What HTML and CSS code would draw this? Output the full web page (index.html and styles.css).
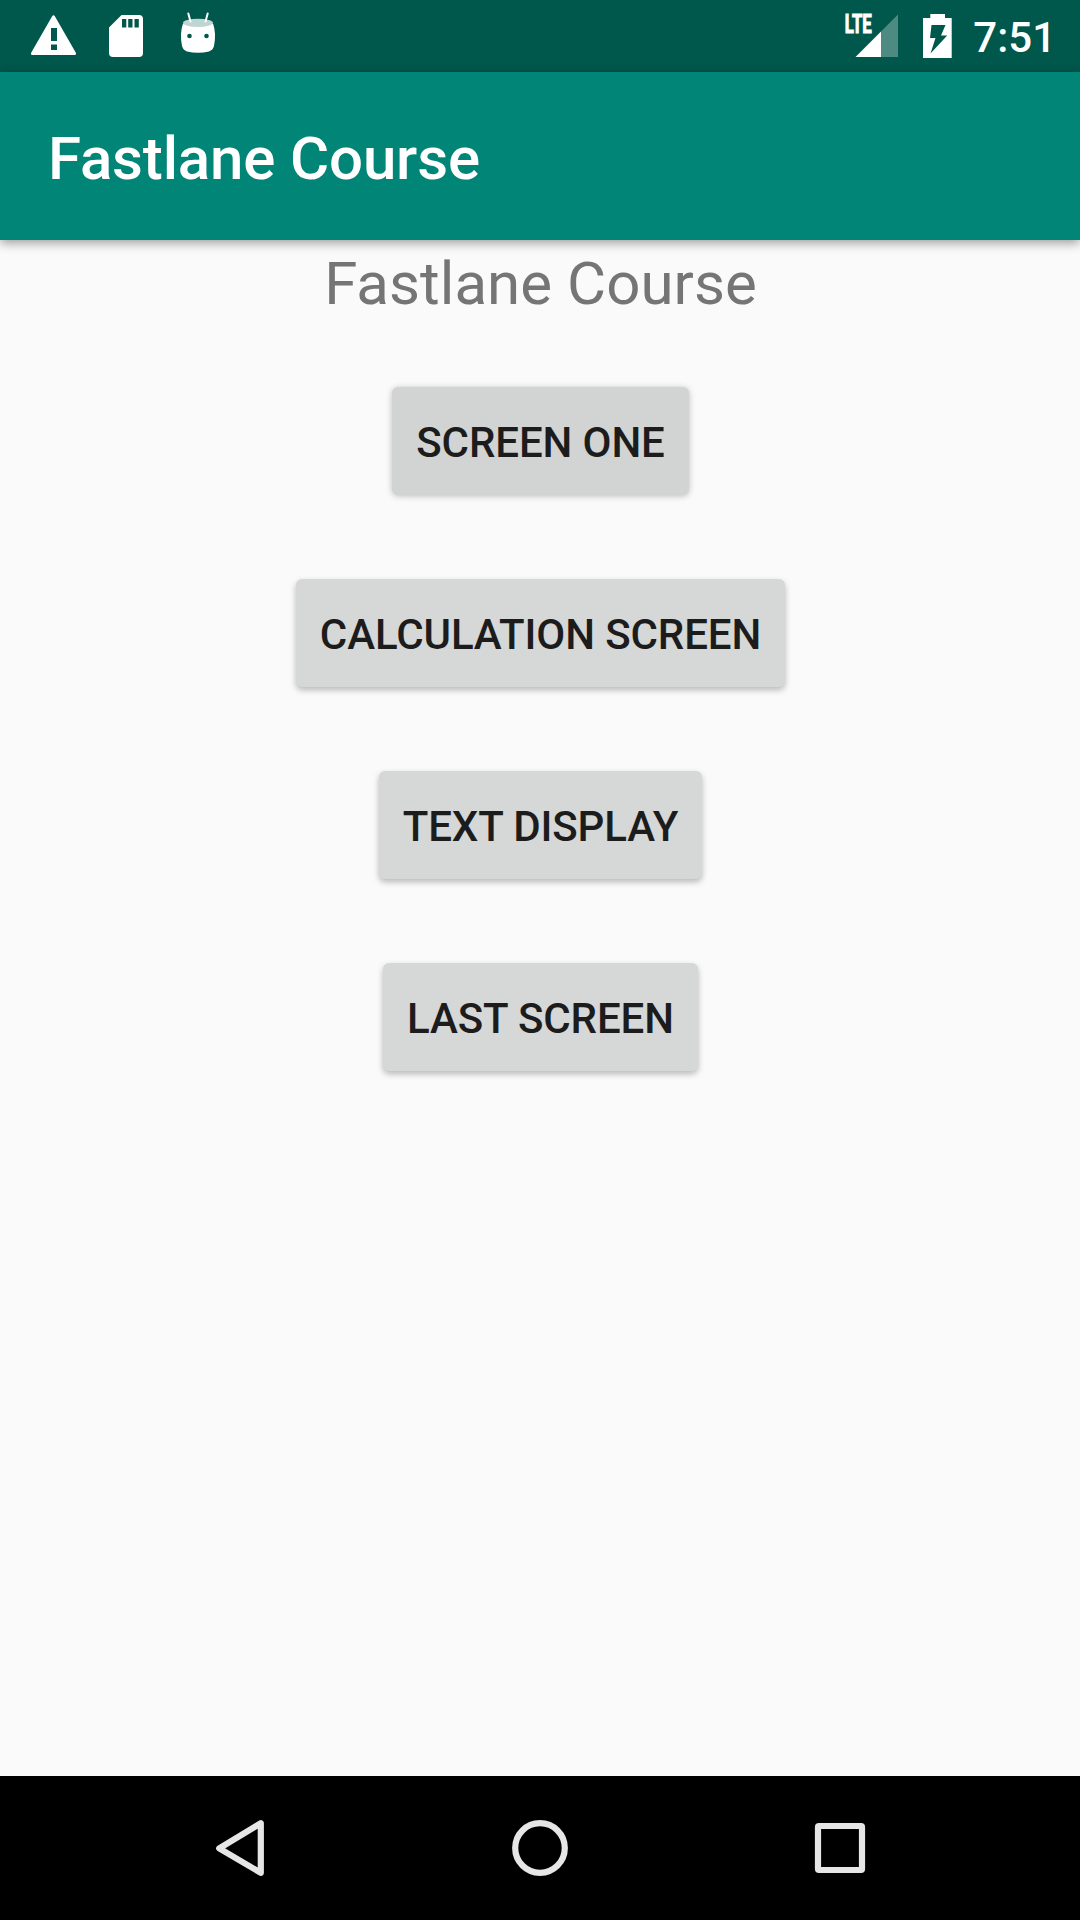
FILE: index.html
```
<!DOCTYPE html>
<html lang="en">
<head>
<meta charset="utf-8">
<title>Fastlane Course</title>
<link rel="stylesheet" href="styles.css">
</head>
<body>
<div class="status">
  <div class="notifications">
    <svg width="72" height="72" viewBox="18 0 72 72"><path fill="#fff" fill-rule="evenodd" d="M52 16.500Q53.500 13.800 55 16.500L75.700 52.500Q76.800 55 74.500 55H32.500Q30.200 55 31.300 52.500ZM51 28v13h6V28zM51 44.500v5.500h6v-5.500z"/></svg>
    <svg width="72" height="72" viewBox="90 0 72 72"><path fill="#fff" fill-rule="evenodd" d="M121.500 15H139a4 4 0 0 1 4 4V53a4 4 0 0 1-4 4H113a4 4 0 0 1-4-4V27.500ZM122 19v8.500h4.300V19zM128.200 19v8.500h4.300V19zM134.500 19v8.500h4.300V19z"/></svg>
    <svg width="72" height="72" viewBox="162 0 72 72">
      <path fill="#fff" d="M183 23.500Q198 29 213 23.500Q216.500 33 214 46Q213 50 209 51.500Q198 54 187 51.500Q183 50 182 46Q179.500 33 183 23.500Z"/>
      <ellipse cx="198" cy="22.800" rx="15" ry="4" fill="#bfd5d1"/>
      <path d="M188.300 13.500L190.500 21.500M207.700 13.500L205.500 21.500" stroke="#fff" stroke-width="2" stroke-linecap="round"/>
      <circle cx="189.500" cy="36" r="2.300" fill="#00574b"/><circle cx="206.500" cy="36" r="2.300" fill="#00574b"/>
    </svg>
  </div>
  <div class="system">
    <svg width="120" height="72" viewBox="840 0 120 72">
      <text class="network" x="844.800" y="33.200" textLength="27" lengthAdjust="spacingAndGlyphs">LTE</text>
      <path fill="#fff" d="M881 31.500V57H855.500Z"/>
      <path fill="#4d8a81" d="M881 31.500L898 14.500V57H881Z"/>
      <path fill="#fff" fill-rule="evenodd" d="M930.300 14H945V18H951.700V58H923V18H930.300ZM931.500 25L930 38H935.500L930.500 53.500L947.200 35.500H941L945.500 25Z"/>
    </svg>
    <span class="clock">7:51</span>
  </div>
</div>
<header class="appbar">Fastlane Course</header>
<main class="content">
  <h1 class="title">Fastlane Course</h1>
  <button class="button pressed">SCREEN ONE</button>
  <button class="button">CALCULATION SCREEN</button>
  <button class="button">TEXT DISPLAY</button>
  <button class="button">LAST SCREEN</button>
</main>
<nav class="navbar">
  <svg width="60" height="60" viewBox="210 1818 60 60"><path d="M219.200 1848.300L260.800 1823.200V1872.800Z"/></svg>
  <svg width="60" height="60" viewBox="510 1818 60 60"><circle cx="540" cy="1848" r="24.800"/></svg>
  <svg width="60" height="60" viewBox="810 1818 60 60"><rect x="818" y="1826" width="44" height="44" rx="1"/></svg>
</nav>
</body>
</html>
```
FILE: styles.css
```
body{margin:0;width:1080px;height:1920px;display:flex;flex-direction:column;background:#fafafa;font-family:Roboto,sans-serif;overflow:hidden}
.status{height:72px;background:#00574b;display:flex;justify-content:space-between;color:#fff}
.notifications{display:flex;padding-left:18px}
.system{display:flex;width:240px}
.network{font:700 25px Roboto,sans-serif;fill:#fff;stroke:#fff;stroke-width:1.100}
.clock{flex:1;padding-right:24px;text-align:right;font-size:42px;font-weight:500;line-height:76px}
.appbar{height:168px;box-sizing:border-box;background:#008577;color:#fff;font-size:60px;font-weight:500;line-height:174px;letter-spacing:-.15px;padding-left:48px;box-shadow:0 3px 10px rgba(0,0,0,.38)}
.content{flex:1;display:flex;flex-direction:column;align-items:center;padding-left:1px}
.title{margin:8px 0 68px;font-size:60px;font-weight:400;line-height:71px;letter-spacing:.05px;color:#757575}
.button{height:108px;box-sizing:border-box;margin:0 0 84px;padding:3px 24px 0;border:0;border-radius:6px;background:#d6d7d7;color:#1c1c1c;font:500 42px/105px Roboto,sans-serif;letter-spacing:-.1px;box-shadow:0 3px 6px rgba(0,0,0,.27)}
.pressed{background:#d2d4d3;box-shadow:0 1px 6px rgba(0,0,0,.25)}
.navbar{height:144px;background:#000;display:flex;justify-content:center;align-items:center;gap:240px}
.navbar svg{fill:none;stroke:#e6e6e6;stroke-width:6.200;stroke-linejoin:round}
```
